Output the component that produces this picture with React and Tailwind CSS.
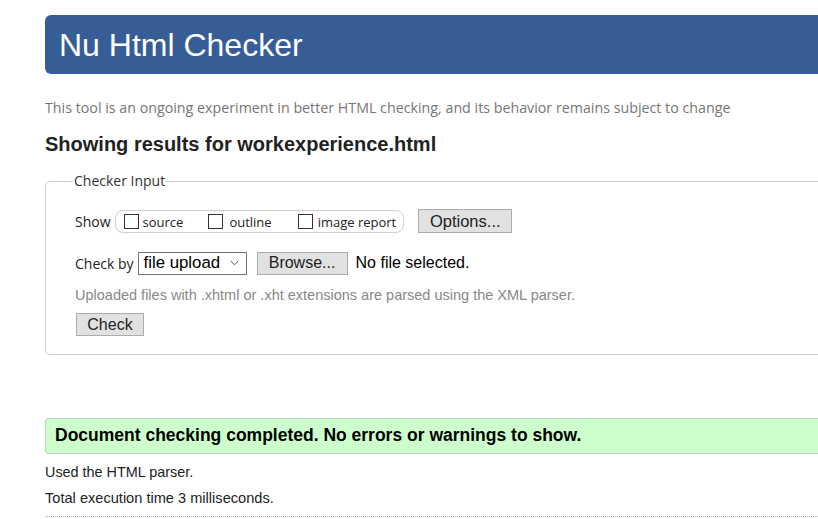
export default function App() {
  return (
    <div className="w-[818px] h-[519px] overflow-hidden bg-white text-[#222]" style={{ fontFamily: '"Liberation Sans", Arial, sans-serif' }}>
      <div className="w-[1000px] pl-[45px] pt-[15px]">
        <header className="h-[59px] bg-[#365d95] rounded-l-[6px] flex items-center pl-[14px]">
          <h1 className="text-white text-[32px] leading-none">Nu Html Checker</h1>
        </header>
        <p className="mt-[25px] text-[14.25px] text-[#767676] leading-[18px] font-['Open_Sans',sans-serif]">
          This tool is an ongoing experiment in better HTML checking, and its behavior remains subject to change
        </p>
        <h2 className="mt-[16px] text-[20px] font-bold leading-[22px]">Showing results for workexperience.html</h2>

        <fieldset className="mt-[17px] border border-[#cfcfcf] rounded-[5px] pl-[29px] pb-[17px]">
          <legend className="ml-[-2px] px-[1px] text-[14px] leading-[18px] text-[#333] font-['Open_Sans',sans-serif]">Checker Input</legend>
          <div className="flex items-center mt-[19px]">
            <span className="text-[14px] font-['Open_Sans',sans-serif] mr-[4px]">Show</span>
            <div className="flex items-center h-[23px] border border-[#d0d0d0] rounded-[8px] pl-[8px] pr-[7px] text-[13px] font-['Open_Sans',sans-serif]">
              <span className="w-[15px] h-[15px] border border-[#333] bg-white" />
              <span className="ml-[4px] mr-[25px] translate-y-[2px]">source</span>
              <span className="w-[15px] h-[15px] border border-[#333] bg-white" />
              <span className="ml-[6px] mr-[26px] translate-y-[2px]">outline</span>
              <span className="w-[15px] h-[15px] border border-[#333] bg-white" />
              <span className="ml-[5px] translate-y-[2px]">image report</span>
            </div>
            <button className="ml-[14px] h-[24px] w-[94px] bg-[#e1e1e1] border border-[#adadad] text-[16.5px] leading-none">Options...</button>
          </div>
          <div className="flex items-center mt-[18px]">
            <span className="text-[14px] font-['Open_Sans',sans-serif] mr-[4px]">Check by</span>
            <div className="w-[109px] h-[23px] border border-[#767676] flex items-center pl-[5px] pr-[7px] justify-between text-[16.8px] text-black">
              <span>file upload</span>
              <svg width="9" height="6" viewBox="0 0 9 6"><path d="M0.5 0.8 L4.5 4.8 L8.5 0.8" fill="none" stroke="#555" strokeWidth="1" /></svg>
            </div>
            <button className="ml-[10px] h-[23px] w-[91px] bg-[#e1e1e1] border border-[#adadad] text-[16px] leading-none">Browse...</button>
            <span className="ml-[8px] text-[16px] text-black">No file selected.</span>
          </div>
          <p className="mt-[11px] text-[14.5px] text-[#888] leading-[18px]">Uploaded files with .xhtml or .xht extensions are parsed using the XML parser.</p>
          <button className="mt-[9px] ml-[1px] h-[23px] w-[68px] bg-[#e1e1e1] border border-[#adadad] text-[16px] leading-none">Check</button>
        </fieldset>

        <div className="mt-[63px] h-[36px] bg-[#ccffcc] border-y border-[#bcd3bc] border-l rounded-l-[4px] flex items-center pl-[9px]">
          <span className="text-[17.5px] font-bold text-black">Document checking completed. No errors or warnings to show.</span>
        </div>
        <p className="mt-[9px] text-[14.4px] leading-[18px]">Used the HTML parser.</p>
        <p className="mt-[8px] text-[14.6px] leading-[18px]">Total execution time 3 milliseconds.</p>
        <div className="mt-[9px] border-t border-dotted border-[#aaa]" />
      </div>
    </div>
  );
}
